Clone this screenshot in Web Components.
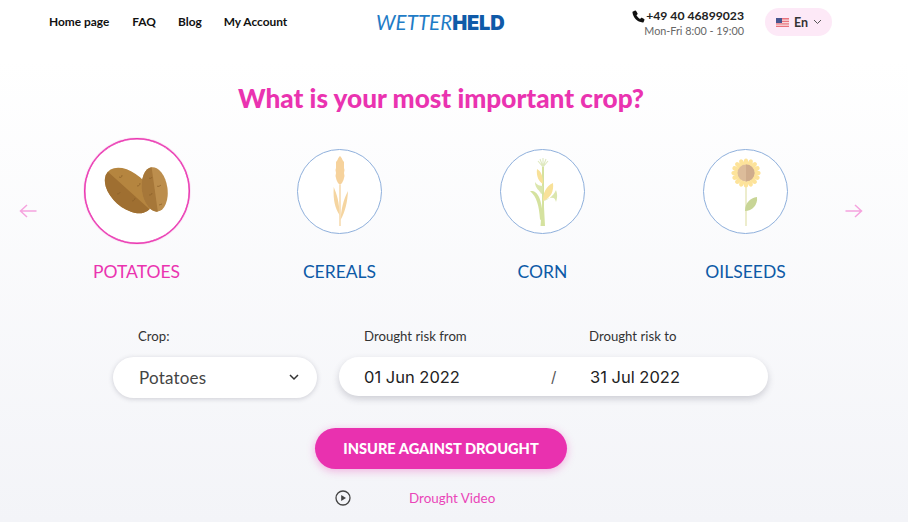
<!DOCTYPE html>
<html>
  <head>
    <meta charset="utf-8" />
    <title>Wetterheld</title>
    <style>
      html, body { margin: 0; height: 100%; }
      body {
        width: 908px;
        height: 522px;
        overflow: hidden;
        font-family: Lato, "Noto Sans", sans-serif;
        background: linear-gradient(#ffffff 0, #ffffff 60px, #f3f4f8 100%);
      }
    </style>

    <template id="site-header">
      <style>
        :host { display: flex; align-items: flex-start; height: 64px; box-sizing: border-box; padding: 8px 76px 0 49px; }
        nav { display: flex; gap: 22px; padding-top: 7px; width: 327px; flex: none; }
        a { font-size: 11.900px; font-weight: 700; color: #111; line-height: 14px; text-decoration: none; white-space: nowrap; }
        a:first-child { margin-right: 1px; }
        .logo { flex: none; width: 235px; margin-top: 4px; font-size: 20.400px; line-height: 20px; letter-spacing: .1px; font-style: italic; color: #1f7cc6; white-space: nowrap; }
        .logo b { font-family: Inter, Lato, sans-serif; font-style: normal; font-weight: 900; font-size: 20px; letter-spacing: -.2px; color: #0f5aa8; }
        .phone { flex: 1; text-align: right; padding-right: 21px; }
        .num { display: flex; justify-content: flex-end; align-items: center; gap: 0; font-size: 12.200px; font-weight: 700; color: #222; line-height: 16px; }
        .hours { font-size: 10.800px; color: #666; line-height: 13px; }
        .lang { flex: none; display: flex; align-items: center; width: 67px; height: 28px; box-sizing: border-box; padding-left: 11px; gap: 5px; border-radius: 14px; background: #fde9f7; font-size: 12.500px; font-weight: 700; color: #333; }
      </style>
      <nav><a>Home page</a><a>FAQ</a><a>Blog</a><a>My Account</a></nav>
      <div class="logo">WETTER<b>HELD</b></div>
      <div class="phone">
        <div class="num">
          <svg width="15" height="15" viewBox="0 0 24 24"><path fill="#111" d="M6.600 2.500 3.200 3.800C2.600 4 2.200 4.600 2.300 5.300 3.300 14 10 20.700 18.700 21.700c.7.1 1.300-.3 1.500-.9l1.300-3.400c.2-.5 0-1.100-.5-1.400l-3.500-2c-.5-.3-1.100-.2-1.500.2l-1.500 1.600c-2.500-1.300-4.500-3.300-5.800-5.800L10.300 8.500c.4-.4.5-1 .2-1.500l-2-3.600c-.3-.5-1.300-1.100-1.900-.9z"/></svg>
          <span>+49 40 46899023</span>
        </div>
        <div class="hours">Mon-Fri 8:00 - 19:00</div>
      </div>
      <div class="lang">
        <svg width="13" height="9" viewBox="0 0 13 9"><rect width="13" height="9" fill="#e9737f"/><rect y="1.500" width="13" height="1.300" fill="#f8dcdc"/><rect y="4" width="13" height="1.300" fill="#f8dcdc"/><rect y="6.500" width="13" height="1.300" fill="#f8dcdc"/><rect width="6" height="5" fill="#47558f"/></svg>
        <span>En</span>
        <svg width="9" height="6" viewBox="0 0 9 6"><path d="M1 1l3.500 3.500L8 1" fill="none" stroke="#555" stroke-width="1"/></svg>
      </div>
    </template>

    <template id="crop-card">
      <style>
        :host { display: flex; flex-direction: column; align-items: center; width: 203px; color: #0d5aa7; }
        :host([selected]) { color: #ea33b0; }
        .disc { width: 106px; height: 106px; display: flex; align-items: center; justify-content: center; }
        .ring { box-sizing: border-box; width: 85px; height: 85px; border-radius: 50%; border: 1px solid #8fb0dc; background: #fff; display: flex; align-items: center; justify-content: center; }
        :host([selected]) .ring { width: 106px; height: 106px; border: 1px solid #ea33b0; box-shadow: inset 0 0 0 .5px #ea33b0, 0 0 1px #ea33b0; }
        .name { margin-top: 17px; font-size: 17.500px; line-height: 22px; white-space: nowrap; }
      </style>
      <div class="disc"><div class="ring"><slot name="art"></slot></div></div>
      <div class="name"><slot></slot></div>
    </template>

    <template id="crop-slider">
      <style>
        :host { display: flex; align-items: flex-start; padding-left: 19px; margin-top: 24px; }
        .arrow { flex: none; width: 18px; height: 16px; margin-top: 65px; }
        .cards { display: flex; margin-left: -2px; flex: none; }
        .next { margin-left: -2px; }
      </style>
      <svg class="arrow" viewBox="0 0 18 16"><path d="M17.500 8H1M8 2 1.500 8 8 14" fill="none" stroke="#f5a3de" stroke-width="1.500"/></svg>
      <div class="cards"><slot></slot></div>
      <svg class="arrow next" viewBox="0 0 18 16"><path d="M.5 8H17M10 2l6.500 6-6.500 6" fill="none" stroke="#f5a3de" stroke-width="1.500"/></svg>
    </template>

    <template id="risk-form">
      <style>
        :host { display: flex; justify-content: flex-start; padding-left: 113px; margin-top: 44px; color: #333; }
        label, .lab { display: block; font-size: 13.200px; line-height: 18px; color: #333; }
        .crop { width: 204px; margin-right: 22px; }
        .crop label { padding-left: 25px; }
        .select { margin-top: 12px; box-sizing: border-box; height: 41px; border-radius: 21px; background: #fff; box-shadow: 0 1px 5px rgba(60,60,80,.22); display: flex; align-items: center; justify-content: space-between; padding: 0 18px 0 26px; font-size: 17px; color: #444; letter-spacing: .2px; }
        .dates { width: 429px; }
        .labels { display: flex; padding-left: 25px; }
        .labels .lab { width: 225px; flex: none; }
        .range { margin-top: 12px; box-sizing: border-box; height: 39px; border-radius: 20px; background: #fff; box-shadow: 0 3px 7px rgba(60,60,80,.22); display: flex; align-items: center; padding-left: 25px; color: #222; font-family: Inter, Lato, sans-serif; font-size: 16.500px; }
        .range span:first-child { width: 187px; }
        .range .sep { width: 39px; color: #555; font-size: 15px; }
      </style>
      <div class="crop">
        <label>Crop:</label>
        <div class="select"><span>Potatoes</span>
          <svg width="10" height="7" viewBox="0 0 10 7"><path d="M1 1l4 4 4-4" fill="none" stroke="#333" stroke-width="1.500"/></svg>
        </div>
      </div>
      <div class="dates">
        <div class="labels"><span class="lab">Drought risk from</span><span class="lab">Drought risk to</span></div>
        <div class="range"><span>01 Jun 2022</span><span class="sep">/</span><span>31 Jul 2022</span></div>
      </div>
    </template>

    <template id="cta-block">
      <style>
        :host { display: flex; flex-direction: column; align-items: center; margin-top: 30px; padding-right: 26px; }
        button { width: 252px; height: 41px; border: 0; border-radius: 21px; background: #e931af; color: #fff; font: 900 14.600px/41px Lato, sans-serif; box-shadow: 0 2px 8px rgba(233,49,175,.35); padding: 0; }
        .video { display: flex; align-items: center; margin: 20px 52px 0 0; width: 160px; color: #ea45b8; font-size: 13.400px; line-height: 18px; white-space: nowrap; }
        svg { flex: none; margin-right: 58px; }
      </style>
      <button>INSURE AGAINST DROUGHT</button>
      <div class="video">
        <svg width="16" height="16" viewBox="0 0 16 16"><circle cx="8" cy="8" r="7" fill="none" stroke="#444" stroke-width="1.300"/><path d="M6.200 4.900v6.200L11 8z" fill="#444"/></svg>
        <span>Drought Video</span>
      </div>
    </template>

    <template id="crop-page">
      <style>
        :host { display: block; }
        h1 { margin: 18px 26px 0 0; text-align: center; font-size: 26.200px; line-height: 32px; font-weight: 900; color: #ea33b0; }
      </style>
      <slot name="top"></slot>
      <h1>What is your most important crop?</h1>
      <slot></slot>
    </template>
  </head>

  <body>
    <crop-page>
      <site-header slot="top"></site-header>
      <crop-slider>
        <crop-card selected>
          <svg slot="art" width="66" height="50" viewBox="0 0 66 50">
            <g transform="rotate(42 24.700 24.500)"><ellipse cx="24.700" cy="24.500" rx="28" ry="17.400" fill="#b5853f"/><path d="M-3.300 24.500a28 17.400 0 0 0 56 0z" fill="#9f6f31"/></g>
            <g transform="rotate(-8 50.700 23.400)"><ellipse cx="50.700" cy="23.400" rx="12.800" ry="22.400" fill="#bc8e4d"/><path d="M50.700 1a12.800 22.400 0 0 0 0 44.800z" fill="#a67739"/></g>
            <path d="M15 11c2 1 3 0 3-2M33 20c2 0 3-1 3-3M13 28c2 0 3-1 3-2M28 35c2 0 3-2 3-3M45 12c1 1 3 0 3-1M53 20c1 1 3 0 4-1M45 29c1 0 3 0 3-2M55 39c1 0 2-1 3-1" fill="none" stroke="#8a5e28" stroke-width=".7"/>
          </svg>
          POTATOES
        </crop-card>
        <crop-card>
          <svg slot="art" width="30" height="72" viewBox="0 0 30 72">
            <path d="M15 1c1 1 2 2 2.500 4l1.500 2v6l.5 2-.5 3 .5 3-1 4-1.500 3-2 2-2-2-1.500-3-1-4 .5-3-.5-3 .5-2V7l1.500-2C13 3 14 2 15 1z" fill="#f6d29c"/>
            <path d="M14.400 30h1.200v41h-1.200z" fill="#f3cf95"/>
            <path d="M14.500 60C10 53 8 45 8.700 32c3 7 5.800 15 5.800 28zM15.500 65c.5-10 3-21 7.500-29-.5 11-3 21-7.500 29z" fill="#f5d5a0"/>
          </svg>
          CEREALS
        </crop-card>
        <crop-card>
          <svg slot="art" width="34" height="72" viewBox="0 0 34 72">
            <path d="M17 12 12 6M17 12l-3-8M17 12V3M17 12l3-8M17 12l5-6" stroke="#dfe9c0" stroke-width="1.100" fill="none"/>
            <path d="M16 12h2v40l1 19h-4.500l1.500-19z" fill="#d5e29f"/>
            <path d="M11 14c4 2 6 7 6 15-4-2-7-8-6-15zM27 28c1 8-2 15-10 18 0-8 3-15 10-18z" fill="#f8e199"/>
            <path d="M9 27c2 3 5 4 8 4 0 2 0 8-2 8-1-4-6-5-6-12zM30 35c1 3 2 6 0 12-1-5-4-6-13-1 3 0 10-4 13-11z" fill="#dbe6ad"/>
            <path d="M4 36c7-1 12 6 13 28 0 2-2 2-3 0-1-13-3-22-10-28z" fill="#d5e29f"/>
          </svg>
          CORN
        </crop-card>
        <crop-card>
          <svg slot="art" width="32" height="72" viewBox="0 0 32 72">
            <path d="M15.300 28h1.400v43h-1.400z" fill="#e6e6b8"/>
            <path d="M15 56c0-8 5-13 12-14 1 8-5 14-12 14z" fill="#c8d596"/>
            <g fill="#fde39a">
              <ellipse cx="16" cy="7" rx="2.300" ry="3.600"/><ellipse cx="16" cy="7" rx="2.300" ry="3.600" transform="rotate(22.500 16 18)"/><ellipse cx="16" cy="7" rx="2.300" ry="3.600" transform="rotate(45 16 18)"/><ellipse cx="16" cy="7" rx="2.300" ry="3.600" transform="rotate(67.500 16 18)"/><ellipse cx="16" cy="7" rx="2.300" ry="3.600" transform="rotate(90 16 18)"/><ellipse cx="16" cy="7" rx="2.300" ry="3.600" transform="rotate(112.500 16 18)"/><ellipse cx="16" cy="7" rx="2.300" ry="3.600" transform="rotate(135 16 18)"/><ellipse cx="16" cy="7" rx="2.300" ry="3.600" transform="rotate(157.500 16 18)"/><ellipse cx="16" cy="7" rx="2.300" ry="3.600" transform="rotate(180 16 18)"/><ellipse cx="16" cy="7" rx="2.300" ry="3.600" transform="rotate(202.500 16 18)"/><ellipse cx="16" cy="7" rx="2.300" ry="3.600" transform="rotate(225 16 18)"/><ellipse cx="16" cy="7" rx="2.300" ry="3.600" transform="rotate(247.500 16 18)"/><ellipse cx="16" cy="7" rx="2.300" ry="3.600" transform="rotate(270 16 18)"/><ellipse cx="16" cy="7" rx="2.300" ry="3.600" transform="rotate(292.500 16 18)"/><ellipse cx="16" cy="7" rx="2.300" ry="3.600" transform="rotate(315 16 18)"/><ellipse cx="16" cy="7" rx="2.300" ry="3.600" transform="rotate(337.500 16 18)"/>
            </g>
            <circle cx="16" cy="18" r="8.500" fill="#dcbc9a"/><path d="M16 9.500a8.500 8.500 0 0 1 0 17z" fill="#cfac8c"/>
          </svg>
          OILSEEDS
        </crop-card>
      </crop-slider>
      <risk-form></risk-form>
      <cta-block></cta-block>
    </crop-page>

    <script>
      // each element just clones its template into an open shadow root
      ['site-header', 'crop-card', 'crop-slider', 'risk-form', 'cta-block', 'crop-page'].forEach((tag) => {
        customElements.define(
          tag,
          class extends HTMLElement {
            constructor() {
              super();
              this.attachShadow({ mode: 'open' });
              this.shadowRoot.appendChild(document.getElementById(tag).content.cloneNode(true));
            }
          }
        );
      });
    </script>
  </body>
</html>
